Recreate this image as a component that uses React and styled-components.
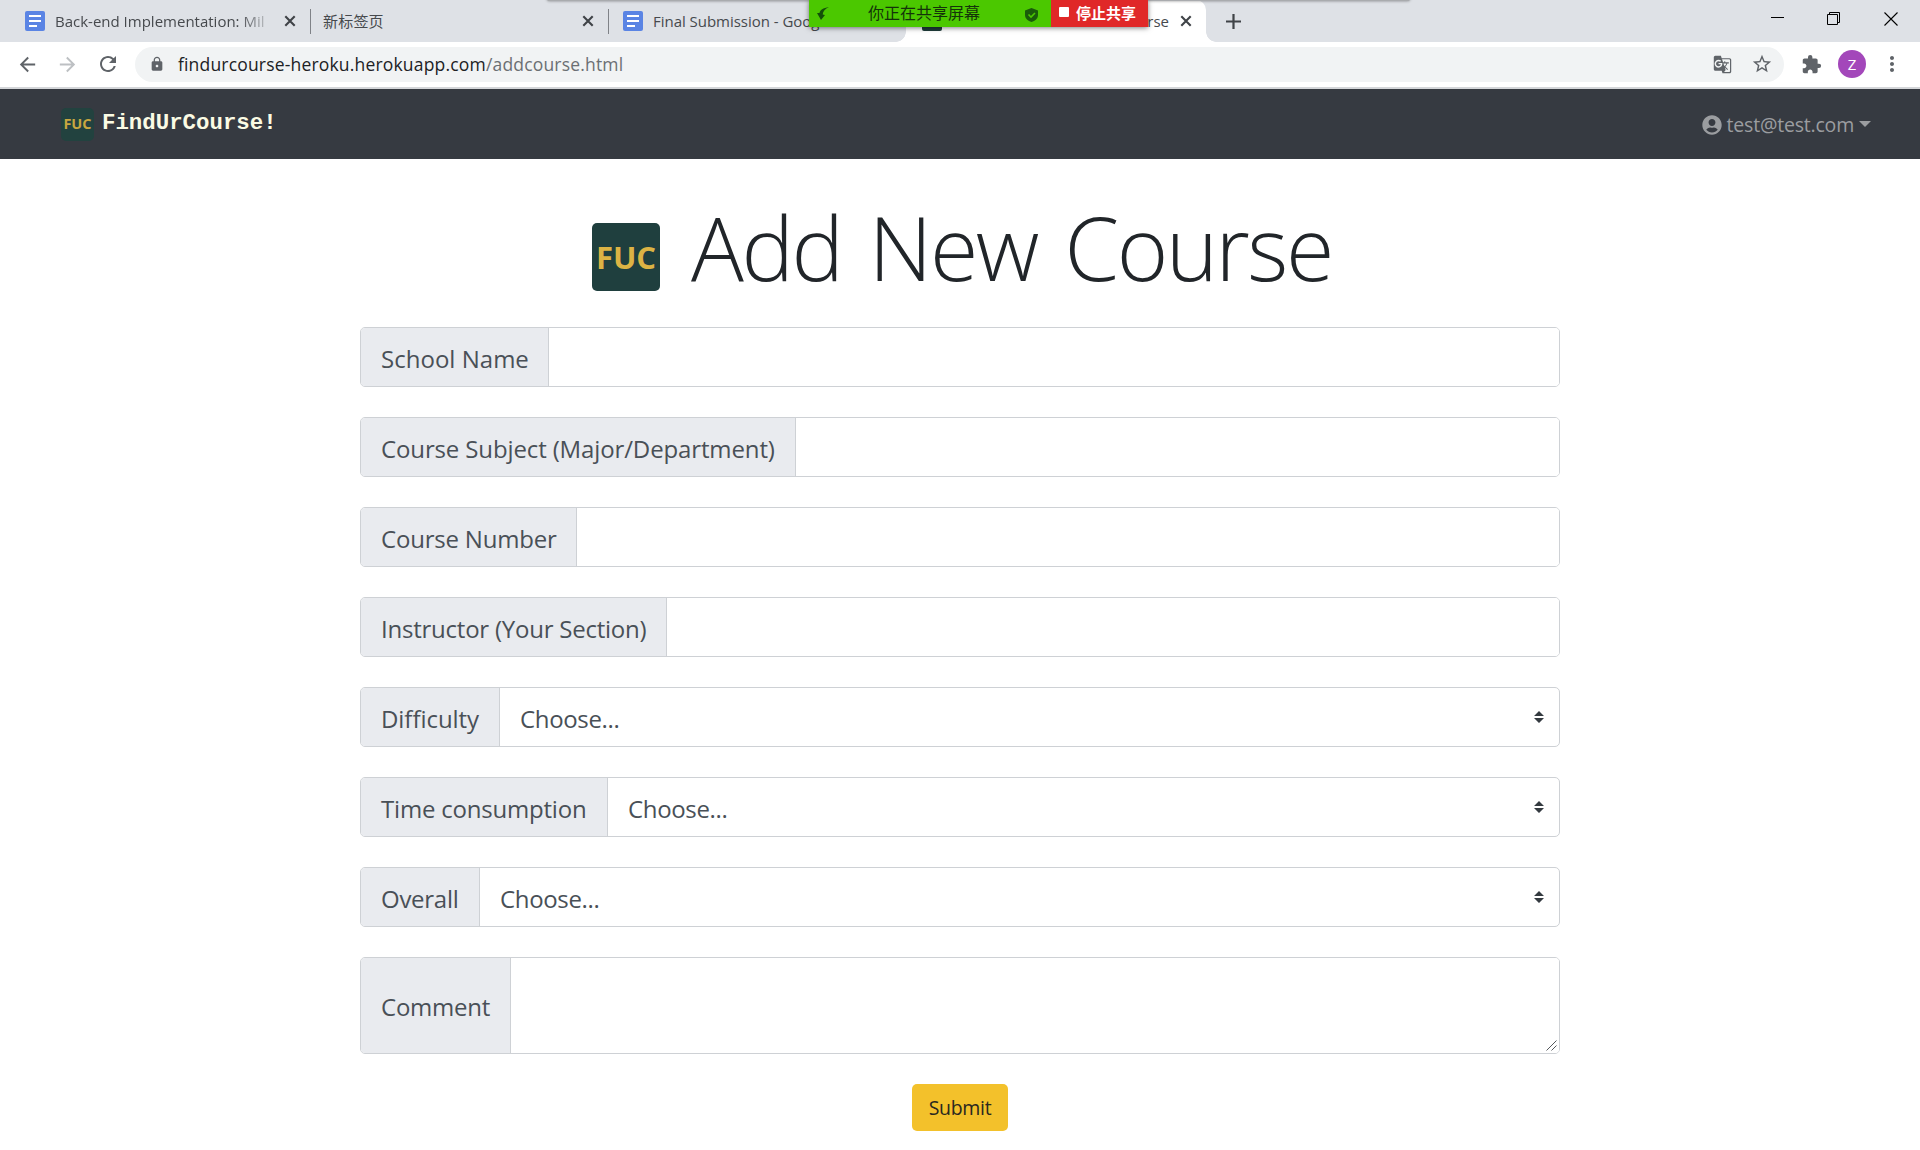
import React from "react";
import styled, { createGlobalStyle } from "styled-components";
import {
  MdArrowBack,
  MdArrowForward,
  MdRefresh,
  MdLock,
  MdStarBorder,
  MdExtension,
  MdMoreVert,
  MdGTranslate,
} from "react-icons/md";
import { FaUserCircle } from "react-icons/fa";

const GlobalStyle = createGlobalStyle`
  *, *::before, *::after { box-sizing: border-box; }
  body {
    margin: 0;
    background: #fff;
    font-family: "Open Sans", "Noto Sans", "Noto Sans CJK SC", sans-serif;
    color: #212529;
    overflow: hidden;
  }
  svg { display: block; flex: none; }
`;

const Screen = styled.div`
  position: relative;
  width: 1920px;
  height: 1150px;
  overflow: hidden;
  background: #fff;
`;

/* ---------- browser chrome ---------- */

const TabStrip = styled.div`
  display: flex;
  height: 42px;
  background: #dee1e6;
`;

const Tab = styled.div`
  display: flex;
  align-items: center;
  width: ${(p) => p.$width}px;
  height: 42px;
  padding: 0 13px 0 ${(p) => p.$left}px;
  gap: 10px;
`;

const ActiveTab = styled(Tab)`
  position: relative;
  background: #fff;
  border-radius: 10px 10px 0 0;
  &::before,
  &::after {
    content: "";
    position: absolute;
    bottom: 0;
    width: 10px;
    height: 10px;
  }
  &::before {
    left: -10px;
    background: radial-gradient(circle at 0 0, #dee1e6 9.5px, #fff 10px);
  }
  &::after {
    right: -10px;
    background: radial-gradient(circle at 100% 0, #dee1e6 9.5px, #fff 10px);
  }
`;

const TabTitle = styled.span`
  flex: 1;
  min-width: 0;
  white-space: nowrap;
  font-size: 15px;
  line-height: 24px;
  letter-spacing: ${(p) => p.$spacing || 0}px;
  color: #46494d;
  text-align: ${(p) => p.$align || "left"};
  mask-image: ${(p) =>
    p.$fade ? "linear-gradient(to right, #000 84%, transparent 101%)" : "none"};
`;

const TabDivider = styled.div`
  width: 1px;
  height: 25px;
  margin-top: 9px;
  background: #7f8287;
`;

const SiteIcon = styled.div`
  width: 20px;
  height: 20px;
  border-radius: 2px;
  background: #1f3d3b;
`;

const NewTab = styled.div`
  display: flex;
  align-items: center;
  padding-left: 20px;
`;

const WindowControls = styled.div`
  display: flex;
  align-items: flex-start;
  gap: 43px;
  margin-left: auto;
  padding: 12px 22px 0 0;
`;

const Toolbar = styled.div`
  display: flex;
  align-items: center;
  height: 47px;
  padding: 0 16px 1px 16px;
  background: #fff;
  border-bottom: 2px solid #d4d6d9;
  color: #5f6368;
`;

const NavIcon = styled.div`
  width: 40px;
  color: ${(p) => (p.$dim ? "#bdc0c3" : "#5f6368")};
`;

const AddressBar = styled.div`
  display: flex;
  align-items: center;
  width: 1650px;
  height: 35px;
  margin: 0 17px 0 -1px;
  padding: 0 11px 0 14px;
  border-radius: 18px;
  background: #f1f3f4;
`;

const Url = styled.div`
  flex: 1;
  padding-left: 13px;
  font-size: 17.5px;
  line-height: 24px;
  letter-spacing: 0.18px;
  color: #202124;
  span {
    color: #6b6f73;
  }
`;

const AddressActions = styled.div`
  display: flex;
  align-items: center;
  gap: 19px;
`;

const Avatar = styled.div`
  display: grid;
  place-items: center;
  width: 28px;
  height: 28px;
  margin: 0 14px 0 16px;
  border-radius: 50%;
  background: #a347ba;
  color: #fff;
  font-size: 15px;
`;

/* ---------- screen sharing overlay ---------- */

const OverlayEdge = styled.div`
  position: absolute;
  top: -4px;
  left: 547px;
  width: 863px;
  height: 5px;
  border-radius: 4px;
  background: #a9abae;
  box-shadow: 0 0 3px rgba(0, 0, 0, 0.45);
`;

const ShareBanner = styled.div`
  position: absolute;
  top: 0;
  left: 809px;
  display: flex;
  width: 339px;
  height: 27px;
  box-shadow: 0 1px 5px rgba(0, 0, 0, 0.5);
  font-family: "Noto Sans CJK SC", sans-serif;
`;

const ShareStatus = styled.div`
  display: flex;
  align-items: center;
  width: 242px;
  padding: 0 13px 0 8px;
  background: #4bc800;
  color: #14330a;
  font-size: 16px;
  line-height: 24px;
`;

const ShareText = styled.span`
  flex: 1;
  padding: 0 0 3px 39px;
`;

const ShieldIcon = styled.svg`
  margin-top: 3px;
`;

const StopShare = styled.div`
  display: flex;
  align-items: center;
  gap: 7px;
  width: 97px;
  padding: 0 0 3px 8px;
  background: #e02828;
  color: #fff;
  font-size: 15px;
  font-weight: 700;
  white-space: nowrap;
`;

const StopSquare = styled.i`
  width: 10px;
  height: 10px;
  border-radius: 1px;
  background: #fff;
`;

/* ---------- page ---------- */

const Navbar = styled.nav`
  display: flex;
  align-items: center;
  justify-content: space-between;
  height: 70px;
  padding: 0 49px 0 61px;
  background: #363a41;
`;

const Brand = styled.div`
  display: flex;
  align-items: center;
  gap: 8px;
  color: #fbfbe4;
  font: bold 22.4px/30px "Liberation Mono", monospace;
  span {
    padding-bottom: 3px;
  }
`;

const Logo = styled.div`
  display: grid;
  place-items: center;
  flex: none;
  width: ${(p) => p.$size}px;
  height: ${(p) => p.$size}px;
  border-radius: 5px;
  background: ${(p) => (p.$small ? "#22423f" : "#1f3f3e")};
  color: ${(p) => (p.$small ? "#c8a740" : "#dcb344")};
  font: 700 ${(p) => p.$font}px/1 "Open Sans", sans-serif;
`;

const Account = styled.div`
  display: flex;
  align-items: center;
  padding-top: 2px;
  color: #9b9da0;
  font-size: 19.5px;
  line-height: 28px;
  span {
    margin: 0 5px;
    letter-spacing: ${(p) => p.$spacing}px;
  }
`;

const Caret = styled.i`
  border: 6px solid transparent;
  border-top: 6px solid #9b9da0;
  border-bottom: 0;
  margin-top: -3px;
`;

const Content = styled.main`
  display: flex;
  flex-direction: column;
  align-items: center;
  width: 1200px;
  margin: 0 auto;
`;

const Heading = styled.h1`
  display: flex;
  align-items: flex-start;
  gap: 31px;
  width: 736px;
  height: 168px;
  margin: 0;
  font-size: 88px;
  font-weight: 300;
  line-height: 108px;
  white-space: nowrap;
  letter-spacing: -2.4px;
  word-spacing: 7px;
  ${Logo} {
    margin-top: 64px;
    letter-spacing: 0;
  }
  > span {
    margin-top: 34px;
  }
`;

const Form = styled.form`
  display: flex;
  flex-direction: column;
  align-items: center;
  gap: 30px;
  width: 100%;
`;

const Field = styled.div`
  position: relative;
  display: flex;
  width: 100%;
  height: ${(p) => p.$height || 60}px;
  border: 1px solid #ced1d5;
  border-radius: 5px;
  overflow: hidden;
`;

const Label = styled.label`
  display: flex;
  align-items: center;
  flex: none;
  width: ${(p) => p.$width}px;
  padding: ${(p) => (p.$tall ? 2 : 4)}px 0 0 20px;
  border-right: 1px solid #ced1d5;
  background: #e9ebef;
  color: #495057;
  font-size: 24px;
  line-height: 36px;
  letter-spacing: ${(p) => p.$spacing}px;
  white-space: nowrap;
`;

const Input = styled.input`
  flex: 1;
  border: 0;
  outline: 0;
  background: #fff;
`;

const Textarea = styled.textarea`
  flex: 1;
  border: 0;
  outline: 0;
  padding: 10px 20px;
  resize: none;
  background: #fff;
`;

const ResizeGrip = styled.svg`
  position: absolute;
  right: 2px;
  bottom: 2px;
`;

const Select = styled.select`
  flex: 1;
  border: 0;
  outline: 0;
  appearance: none;
  background: #fff;
  padding: 4px 0 0 20px;
  color: #495057;
  font: 24px/36px "Open Sans", "Noto Sans", sans-serif;
  letter-spacing: -0.35px;
`;

const SelectArrows = styled.svg`
  align-self: center;
  margin-right: 15px;
`;

const Submit = styled.button`
  width: 96px;
  height: 47px;
  padding: 0;
  border: 0;
  border-radius: 5px;
  background: #f3c12b;
  color: #2b2820;
  font: 19.5px/28px "Open Sans", "Noto Sans", sans-serif;
  letter-spacing: -0.3px;
`;

const DocIcon = () => (
  <svg width="20" height="20" viewBox="0 0 20 20">
    <rect width="20" height="20" rx="2" fill="#5a84e4" />
    <path d="M4 5h12M4 10h12M4 15h8" stroke="#fff" strokeWidth="2.2" />
  </svg>
);

const CloseIcon = () => (
  <svg width="14" height="14" viewBox="0 0 14 14">
    <path d="M2.3 2.3l9.4 9.4m0-9.4l-9.4 9.4" stroke="#3f4347" strokeWidth="2.1" />
  </svg>
);

const FIELDS = [
  { label: "School Name", width: 188, spacing: 0.02 },
  { label: "Course Subject (Major/Department)", width: 435, spacing: -0.13 },
  { label: "Course Number", width: 216, spacing: -0.2 },
  { label: "Instructor (Your Section)", width: 306, spacing: -0.23 },
  { label: "Difficulty", width: 139, spacing: -0.05, kind: "select" },
  { label: "Time consumption", width: 247, spacing: -0.2, kind: "select" },
  { label: "Overall", width: 119, spacing: -0.28, kind: "select" },
  { label: "Comment", width: 150, spacing: -0.22, kind: "textarea", height: 97 },
];

function Control({ kind }) {
  if (kind === "select") {
    return (
      <>
        <Select>
          <option>Choose...</option>
        </Select>
        <SelectArrows width="10" height="12" viewBox="0 0 10 12">
          <path d="M5 0l5 5H0zM5 12l5-5H0z" fill="#343a40" />
        </SelectArrows>
      </>
    );
  }
  if (kind === "textarea") {
    return (
      <>
        <Textarea />
        <ResizeGrip width="11" height="11" viewBox="0 0 11 11">
          <path d="M.5 10.500l10-10M5.500 10.500l5-5" stroke="#55585c" />
        </ResizeGrip>
      </>
    );
  }
  return <Input />;
}

function Browser() {
  return (
    <header>
      <TabStrip>
        <Tab $width={310} $left={25}>
          <DocIcon />
          <TabTitle $fade>Back-end Implementation: Mil</TabTitle>
          <CloseIcon />
        </Tab>
        <TabDivider />
        <Tab $width={297} $left={12}>
          <TabTitle $spacing={0.2}>新标签页</TabTitle>
          <CloseIcon />
        </Tab>
        <TabDivider />
        <Tab $width={297} $left={14}>
          <DocIcon />
          <TabTitle $spacing={-0.03}>Final Submission - Goog</TabTitle>
        </Tab>
        <ActiveTab $width={300} $left={16}>
          <SiteIcon />
          <TabTitle $align="right">Course</TabTitle>
          <CloseIcon />
        </ActiveTab>
        <NewTab>
          <svg width="15" height="15" viewBox="0 0 15 15">
            <path d="M7.5 0v15M0 7.5h15" stroke="#3f4347" strokeWidth="2.2" />
          </svg>
        </NewTab>
        <WindowControls>
          <svg width="13" height="13" viewBox="0 0 13 13">
            <path d="M0 5.5h13" stroke="#000" />
          </svg>
          <svg width="14" height="14" viewBox="0 0 14 14" fill="none" stroke="#000">
            <path d="M.5 2.5h10v10H.5zM2.5 2.500V.5h10v10h-2" />
          </svg>
          <svg width="14" height="14" viewBox="0 0 14 14">
            <path d="M.5 .5l13 13m0-13l-13 13" stroke="#000" strokeWidth="1.1" />
          </svg>
        </WindowControls>
      </TabStrip>
      <Toolbar>
        <NavIcon><MdArrowBack size={23} /></NavIcon>
        <NavIcon $dim><MdArrowForward size={23} /></NavIcon>
        <NavIcon><MdRefresh size={24} /></NavIcon>
        <AddressBar>
          <MdLock size={16} />
          <Url>findurcourse-heroku.herokuapp.com<span>/addcourse.html</span></Url>
          <AddressActions>
            <MdGTranslate size={19} />
            <MdStarBorder size={22} />
          </AddressActions>
        </AddressBar>
        <MdExtension size={21} />
        <Avatar>Z</Avatar>
        <MdMoreVert size={24} />
      </Toolbar>
    </header>
  );
}

function ShareOverlay() {
  return (
    <>
      <OverlayEdge />
      <ShareBanner>
        <ShareStatus>
          <svg width="12" height="13" viewBox="0 0 12 13">
            <path d="M12 0C6 1 3 3 2.500 6L0 6l4 7 4-5-2.300-.6C6 4.500 8 2 12 0z" fill="#14500a" />
          </svg>
          <ShareText>你正在共享屏幕</ShareText>
          <ShieldIcon width="13" height="14" viewBox="0 0 13 14">
            <path d="M6.500 0L13 2.500V7c0 3.500-3 6-6.500 7C3 13 0 10.500 0 7V2.500z" fill="#1a5c0a" />
            <path d="M3.500 6.500l2.500 2.500 4-4" fill="none" stroke="#4bc800" strokeWidth="1.600" />
          </ShieldIcon>
        </ShareStatus>
        <StopShare>
          <StopSquare />
          停止共享
        </StopShare>
      </ShareBanner>
    </>
  );
}

export default function App() {
  return (
    <Screen>
      <GlobalStyle />
      <Browser />
      <Navbar>
        <Brand>
          <Logo $size={33} $font={14.5} $small>FUC</Logo>
          <span>FindUrCourse!</span>
        </Brand>
        <Account $spacing={-0.2}>
          <FaUserCircle size={20} />
          <span>test@test.com</span>
          <Caret />
        </Account>
      </Navbar>
      <Content>
        <Heading>
          <Logo $size={68} $font={31}>FUC</Logo>
          <span>Add New Course</span>
        </Heading>
        <Form>
          {FIELDS.map((f) => (
            <Field key={f.label} $height={f.height}>
              <Label $width={f.width} $spacing={f.spacing} $tall={f.kind === "textarea"}>
                {f.label}
              </Label>
              <Control kind={f.kind} />
            </Field>
          ))}
          <Submit type="button">Submit</Submit>
        </Form>
      </Content>
      <ShareOverlay />
    </Screen>
  );
}
